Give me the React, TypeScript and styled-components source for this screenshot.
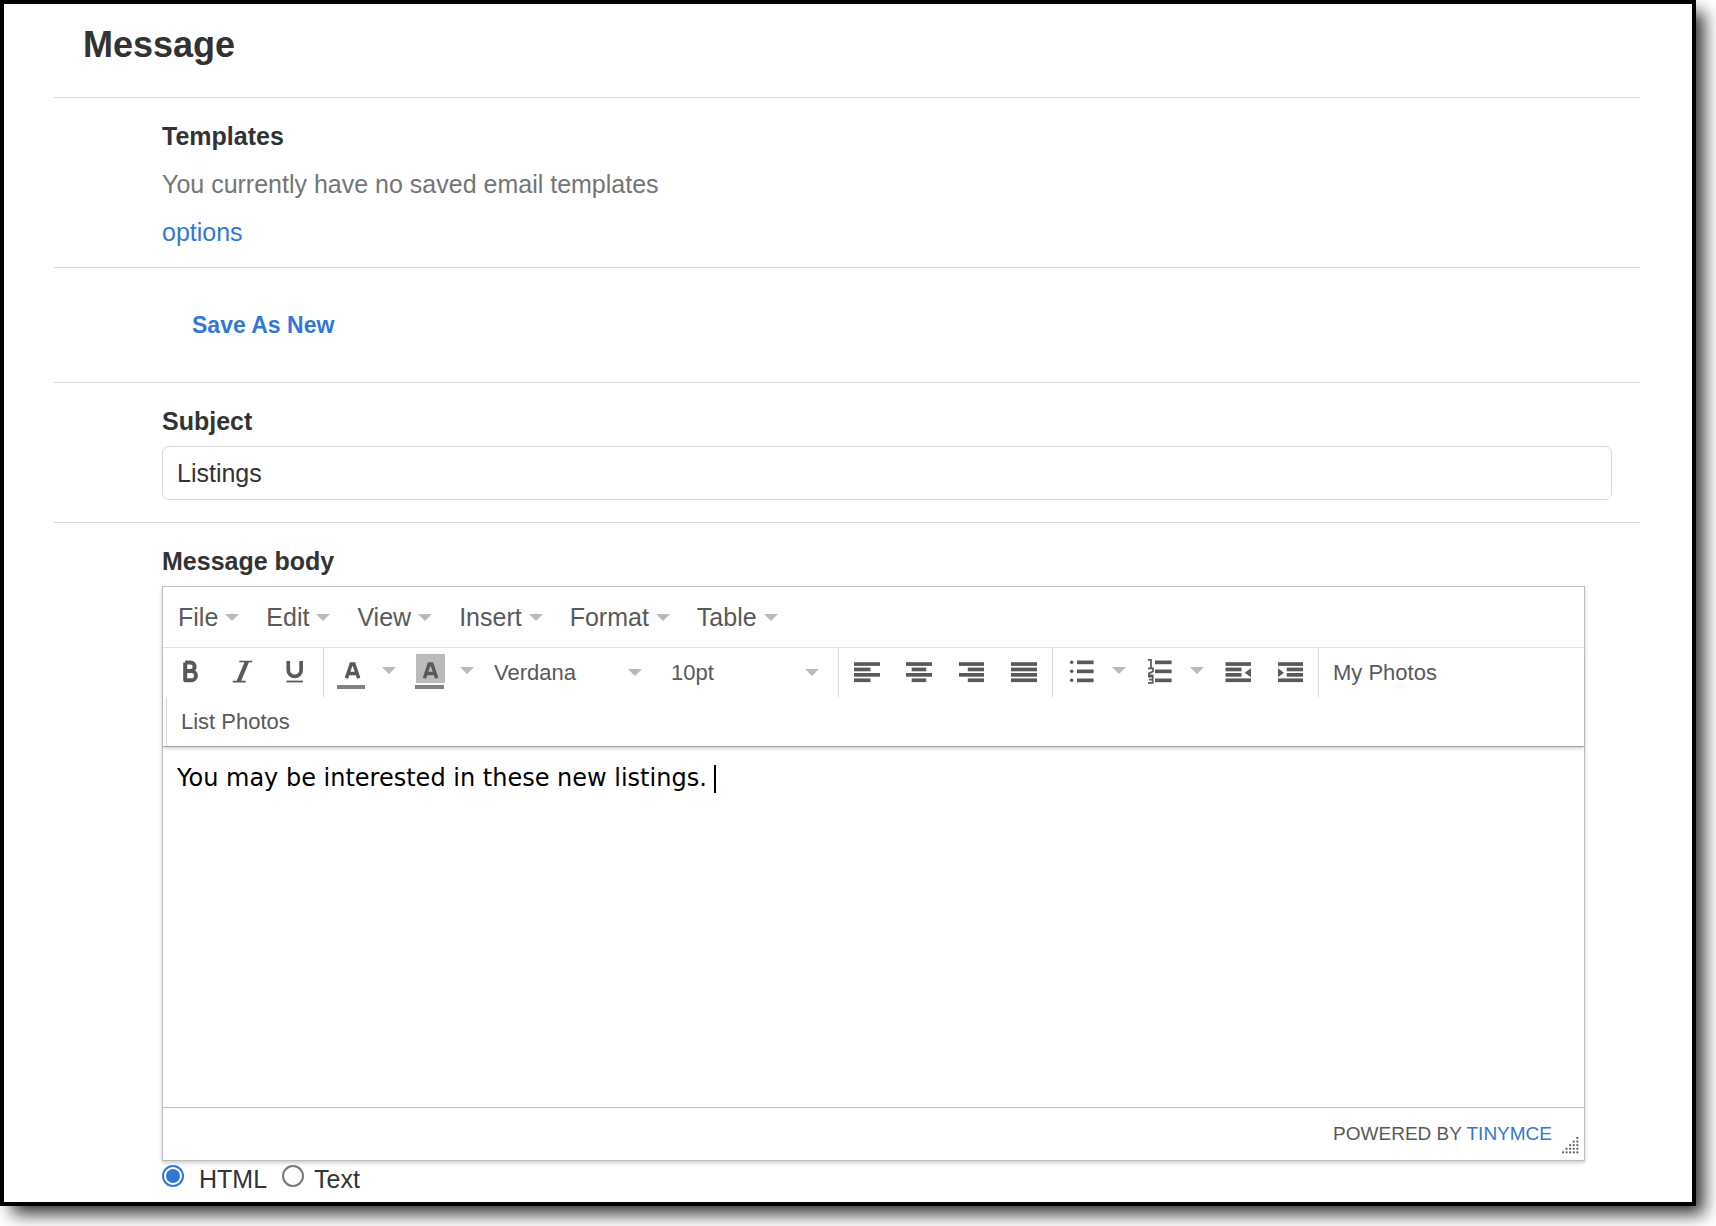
import React from "react";
import styled, { createGlobalStyle } from "styled-components";

const ink = "#333333";
const toolInk = "#595959";
const linkBlue = "#3277d5";
const rule = "#d9d9d9";
const edge = "#bdbdbd";

const GlobalStyle = createGlobalStyle`
  *, *::before, *::after { box-sizing: border-box; }
  body {
    margin: 0;
    background: #fff;
    color: ${ink};
    font: 25px/32px "Liberation Sans", Arial, sans-serif;
  }
  button, input, select { font: inherit; color: inherit; }
`;

const Frame = styled.main`
  margin: 0 20px 20px 0;
  padding: 0 52px 7px 50px;
  border: 4px solid #000;
  background: #fff;
  box-shadow: 10px 10px 16px -2px rgba(0, 0, 0, 0.8);
`;

const Title = styled.h1`
  margin: 0;
  padding: 20px 29px 32px;
  font-size: 36px;
  line-height: 41px;
`;

const Section = styled.section`
  display: flex;
  flex-direction: column;
  gap: 9px;
  padding: 22px 28px 22px 108px;
  border-top: 1px solid ${rule};
`;

const TemplatesSection = styled(Section)`
  gap: 16px;
  padding-bottom: 19px;
`;

const SaveSection = styled(Section)`
  align-items: flex-start;
  padding: 41px 28px 41px 138px;
`;

const BodySection = styled(Section)`
  padding-bottom: 0;
  padding-right: 55px;
`;

const Heading = styled.h2`
  margin: 0;
  font-size: 25px;
  line-height: 32px;
`;

const FieldLabel = styled.label`
  font-weight: bold;
`;

const Hint = styled.p`
  margin: 0;
  color: #757575;
`;

const Link = styled.a`
  color: ${linkBlue};
  text-decoration: none;
`;

const SaveButton = styled.button`
  padding: 0;
  border: 0;
  background: none;
  color: ${linkBlue};
  font-size: 23px;
  font-weight: bold;
  line-height: 32px;
`;

const TextInput = styled.input`
  width: 100%;
  height: 54px;
  padding: 0 14px;
  border: 1px solid ${rule};
  border-radius: 7px;
  background: #fff;
  outline: none;
`;

const Editor = styled.div`
  display: flex;
  flex-direction: column;
  border: 1px solid ${edge};
  box-shadow: 0 2px 4px rgba(0, 0, 0, 0.2);
  color: ${toolInk};
`;

const MenuBar = styled.div`
  display: flex;
  height: 61px;
  padding-left: 2px;
  border-bottom: 1px solid #e2e2e2;
`;

const MenuButton = styled.button`
  display: flex;
  align-items: center;
  gap: 7px;
  padding: 0 14px 0 13px;
  border: 0;
  background: none;
`;

const Toolbars = styled.div`
  border-bottom: 1px solid #a0a0a0;
  box-shadow: 0 3px 3px -1px rgba(0, 0, 0, 0.16);
`;

const ToolRow = styled.div<{ $indent?: boolean }>`
  display: flex;
  height: 49px;
  padding-left: ${(p) => (p.$indent ? "3px" : "0")};
  font-size: 22px;
`;

const Group = styled.div<{ $divided?: boolean; $start?: number; $end?: number }>`
  display: flex;
  padding: 0 ${(p) => p.$end ?? 2}px 0 ${(p) => p.$start ?? 2}px;
  border-left: ${(p) => (p.$divided ? `1px solid ${rule}` : "0")};
`;

const ToolButton = styled.button`
  display: flex;
  align-items: center;
  justify-content: center;
  width: 52px;
  padding: 0;
  border: 0;
  background: none;
`;

const DropButton = styled.button`
  display: flex;
  align-items: center;
  width: 26px;
  padding: 0 0 4px 4px;
  border: 0;
  background: none;
`;

const TextButton = styled.button`
  padding: 0 12px;
  border: 0;
  background: none;
`;

const PickerBox = styled.div`
  display: grid;
  align-items: center;
  width: 177px;

  > * {
    grid-area: 1 / 1;
  }

  > svg {
    justify-self: end;
    margin-right: 17px;
    pointer-events: none;
  }
`;

const Picker = styled.select`
  width: 100%;
  height: 100%;
  padding: 0 32px 0 12px;
  border: 0;
  background: none;
  appearance: none;
`;

const Writing = styled.div`
  min-height: 360px;
  padding: 15px 14px;
  color: #000;
  font: 24px/32px Verdana, "DejaVu Sans", sans-serif;
  outline: none;
`;

const TextCursor = styled.span`
  display: inline-block;
  width: 2px;
  height: 28px;
  background: #000;
  vertical-align: middle;
`;

const StatusBar = styled.div`
  display: flex;
  align-items: center;
  justify-content: flex-end;
  gap: 10px;
  height: 53px;
  padding-right: 5px;
  border-top: 1px solid ${edge};
  font-size: 19px;
`;

const Grip = styled.svg`
  align-self: flex-end;
  margin-bottom: 6px;
`;

const Formats = styled.div`
  display: flex;
  gap: 15px;
  margin-top: -7px;
`;

const Choice = styled.label<{ $gap: number }>`
  display: flex;
  gap: ${(p) => p.$gap}px;
`;

const Radio = styled.input`
  width: 22px;
  height: 22px;
  margin: 2px 0 0;
  padding: 2px;
  border: 2px solid #767676;
  border-radius: 50%;
  background: #fff;
  appearance: none;

  &:checked {
    border-color: ${linkBlue};
    background: ${linkBlue} content-box;
  }
`;

const Caret = () => (
  <svg width="14" height="7" viewBox="0 0 14 7" aria-hidden="true">
    <path d="M0 0h14L7 7z" fill="#b5bbc1" />
  </svg>
);

const Glyph = ({ children }: { children: React.ReactNode }) => (
  <svg width="28" height="29" viewBox="0 0 28 29" overflow="visible" fill={toolInk} aria-hidden="true">
    {children}
  </svg>
);

type Bar = [x: number, width: number];

const barRows = [4.2, 9.6, 15, 20.4];

const Bars = ({ rows }: { rows: Bar[] }) => (
  <>
    {rows.map(([x, w], i) => (
      <rect key={i} x={x} y={barRows[i]} width={w} height="3.7" />
    ))}
  </>
);

const ListBars = () => (
  <>
    {[2.5, 11.5, 20.5].map((y) => (
      <rect key={y} x="9" y={y} width="16.6" height="3.7" />
    ))}
  </>
);

const ColorMark = () => (
  <path d="M8.4 20.3 13.2 6h2.7l4.8 14.3M10.4 15.4h8.3" fill="none" stroke={toolInk} strokeWidth="3.5" />
);

const icons = {
  bold: (
    <path
      d="M9.2 4.5h5.2a4.2 4.2 0 0 1 0 8.5H9.2M9.2 13h6.1a4.6 4.6 0 0 1 0 9.3H9.2zM9.2 4.5v17.8"
      fill="none"
      stroke={toolInk}
      strokeWidth="4"
      strokeLinejoin="round"
    />
  ),
  italic: <path d="M11.3 2.7h13v1.6h-3.4L13.2 22.8h4.5v1.6h-13v-1.6h4L16.5 4.3h-5.2z" />,
  underline: (
    <>
      <path d="M8.3 3v9.2a6.4 6.2 0 0 0 12.8 0V3" fill="none" stroke={toolInk} strokeWidth="3.7" />
      <rect x="6.5" y="22.6" width="16.4" height="1.8" />
    </>
  ),
  foreColor: (
    <>
      <ColorMark />
      <rect x="-1" y="27" width="28" height="4" fill="#808080" />
    </>
  ),
  backColor: (
    <>
      <rect x="0" y="-4" width="29" height="29" fill="#bbbbbb" />
      <ColorMark />
      <rect x="-1" y="27" width="29" height="4" fill="#808080" />
    </>
  ),
  left: <Bars rows={[[1, 26], [1, 16.5], [1, 26], [1, 16.5]]} />,
  center: <Bars rows={[[1, 26], [6.7, 14.5], [1, 26], [6.7, 14.5]]} />,
  right: <Bars rows={[[2, 25], [10.8, 16.2], [2, 25], [10.8, 16.2]]} />,
  justify: <Bars rows={[[2, 26], [2, 26], [2, 26], [2, 26]]} />,
  bullets: (
    <>
      {[4.3, 13.3, 22.3].map((y) => (
        <circle key={y} cx="3.7" cy={y} r="1.8" />
      ))}
      <ListBars />
    </>
  ),
  numbers: (
    <>
      <path
        d="M2 1.8h3v8M2 10.3h5v3.2L3 15.4v1.9h4.5M2 18.6h4.7v6.3H2M3 21.7h3.7"
        fill="none"
        stroke={toolInk}
        strokeWidth="1.7"
      />
      <ListBars />
    </>
  ),
  outdent: (
    <>
      <Bars rows={[[1.5, 25.5], [1.5, 16], [1.5, 16], [1.5, 25.5]]} />
      <path d="M27 10.3v9l-6.2-4.5z" />
    </>
  ),
  indent: (
    <>
      <Bars rows={[[2, 25], [10.7, 16.3], [10.7, 16.3], [2, 25]]} />
      <path d="M2 10.3v9l6-4.5z" />
    </>
  ),
};

const Tool = ({ icon, label }: { icon: keyof typeof icons; label: string }) => (
  <ToolButton type="button" aria-label={label}>
    <Glyph>{icons[icon]}</Glyph>
  </ToolButton>
);

const SplitTool = ({ icon, label }: { icon: keyof typeof icons; label: string }) => (
  <>
    <Tool icon={icon} label={label} />
    <DropButton type="button" aria-label={`${label} options`}>
      <Caret />
    </DropButton>
  </>
);

const menus = ["File", "Edit", "View", "Insert", "Format", "Table"];
const gripRows = [1, 2, 3, 4, 5];

export default function App() {
  return (
    <>
      <GlobalStyle />
      <Frame>
        <Title>Message</Title>

        <TemplatesSection>
          <Heading>Templates</Heading>
          <Hint>You currently have no saved email templates</Hint>
          <div>
            <Link href="#options">options</Link>
          </div>
        </TemplatesSection>

        <SaveSection>
          <SaveButton type="button">Save As New</SaveButton>
        </SaveSection>

        <Section>
          <FieldLabel htmlFor="subject">Subject</FieldLabel>
          <TextInput id="subject" type="text" defaultValue="Listings" />
        </Section>

        <BodySection>
          <Heading id="body-label">Message body</Heading>
          <Editor>
            <MenuBar>
              {menus.map((name) => (
                <MenuButton key={name} type="button">
                  {name}
                  <Caret />
                </MenuButton>
              ))}
            </MenuBar>
            <Toolbars>
              <ToolRow>
                <Group $start={1} $end={3}>
                  <Tool icon="bold" label="Bold" />
                  <Tool icon="italic" label="Italic" />
                  <Tool icon="underline" label="Underline" />
                </Group>
                <Group $divided>
                  <SplitTool icon="foreColor" label="Text color" />
                  <SplitTool icon="backColor" label="Background color" />
                  <PickerBox>
                    <Picker aria-label="Font family" defaultValue="Verdana">
                      <option>Verdana</option>
                    </Picker>
                    <Caret />
                  </PickerBox>
                  <PickerBox>
                    <Picker aria-label="Font size" defaultValue="10pt">
                      <option>10pt</option>
                    </Picker>
                    <Caret />
                  </PickerBox>
                </Group>
                <Group $divided $end={3}>
                  <Tool icon="left" label="Align left" />
                  <Tool icon="center" label="Align center" />
                  <Tool icon="right" label="Align right" />
                  <Tool icon="justify" label="Justify" />
                </Group>
                <Group $divided $start={3}>
                  <SplitTool icon="bullets" label="Bullet list" />
                  <SplitTool icon="numbers" label="Numbered list" />
                  <Tool icon="outdent" label="Decrease indent" />
                  <Tool icon="indent" label="Increase indent" />
                </Group>
                <Group $divided>
                  <TextButton type="button">My Photos</TextButton>
                </Group>
              </ToolRow>
              <ToolRow $indent>
                <Group $divided>
                  <TextButton type="button">List Photos</TextButton>
                </Group>
              </ToolRow>
            </Toolbars>
            <Writing
              role="textbox"
              aria-multiline="true"
              aria-labelledby="body-label"
              contentEditable
              suppressContentEditableWarning
            >
              You may be interested in these new listings. <TextCursor />
            </Writing>
            <StatusBar>
              <span>
                POWERED BY <Link href="#tinymce">TINYMCE</Link>
              </span>
              <Grip width="17" height="17" viewBox="0 0 17 17" fill={toolInk} aria-hidden="true">
                {gripRows.flatMap((n, row) =>
                  Array.from({ length: n }, (_, i) => (
                    <rect key={`${row}-${i}`} x={14.4 - i * 3.6} y={row * 3.6} width="1.9" height="1.9" />
                  ))
                )}
              </Grip>
            </StatusBar>
          </Editor>
          <Formats role="radiogroup" aria-label="Message format">
            <Choice $gap={15}>
              <Radio type="radio" name="format" defaultChecked />
              HTML
            </Choice>
            <Choice $gap={10}>
              <Radio type="radio" name="format" />
              Text
            </Choice>
          </Formats>
        </BodySection>
      </Frame>
    </>
  );
}
